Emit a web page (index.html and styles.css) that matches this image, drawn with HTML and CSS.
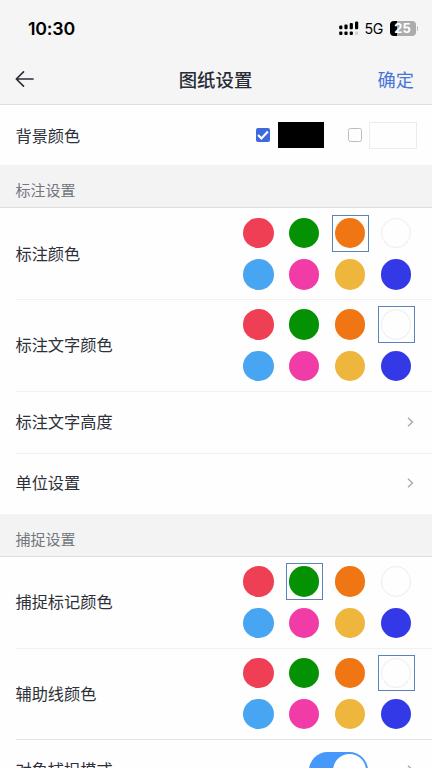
FILE: index.html
```html
<!DOCTYPE html>
<html lang="zh-CN">
<head>
<meta charset="utf-8">
<title>图纸设置</title>
<link rel="stylesheet" href="styles.css">
</head>
<body>
<header class="top">
  <div class="status">
    <span class="time">10:30</span>
    <div class="indicators">
      <svg class="signal" width="20" height="15" viewBox="0 0 20 15">
        <g fill="#000">
          <rect x="0.2" y="4.6" width="3.2" height="3.6" rx="1"/>
          <rect x="5.4" y="3.4" width="3.2" height="4.8" rx="1"/>
          <rect x="10.7" y="2" width="3.2" height="6.2" rx="1"/>
          <rect x="16" y="0.6" width="3.2" height="7.6" rx="1"/>
          <rect x="0.2" y="10.4" width="3.2" height="3.6" rx="1"/>
          <rect x="5.4" y="10.4" width="3.2" height="3.6" rx="1"/>
          <rect x="10.7" y="10.4" width="3.2" height="3.6" rx="1"/>
        </g>
        <rect x="16" y="10.4" width="3.2" height="3.6" rx="1" fill="#d4d4d4"/>
      </svg>
      <span class="network">5G</span>
      <span class="battery">25</span>
      <span class="battery-tip"></span>
    </div>
  </div>
  <nav class="nav">
    <svg class="back" width="20" height="18" viewBox="0 0 20 18" fill="none" stroke="#2b2f3a" stroke-width="1.7" stroke-linecap="round" stroke-linejoin="round"><path d="M18 9H1.5M8.5 1.8L1.3 9l7.2 7.2"/></svg>
    <h1>图纸设置</h1>
    <span class="confirm">确定</span>
  </nav>
</header>
<main>
  <section class="row background">
    <span class="label">背景颜色</span>
    <div class="options">
      <svg class="check" width="14" height="14" viewBox="0 0 14 14"><rect width="14" height="14" rx="2" fill="#3c69dc"/><path d="M2 7l3.4 3.4 6.5-7" fill="none" stroke="#fff" stroke-width="2.2"/></svg>
      <span class="sample black"></span>
      <span class="box"></span>
      <span class="sample white"></span>
    </div>
  </section>
  <h2>标注设置</h2>
  <section class="row colors">
    <span class="label">标注颜色</span>
    <div class="palette">
      <i class="red"></i><i class="green"></i><i class="orange selected"></i><i class="blank"></i>
      <i class="sky"></i><i class="pink"></i><i class="gold"></i><i class="blue"></i>
    </div>
  </section>
  <section class="row colors line">
    <span class="label">标注文字颜色</span>
    <div class="palette">
      <i class="red"></i><i class="green"></i><i class="orange"></i><i class="blank selected"></i>
      <i class="sky"></i><i class="pink"></i><i class="gold"></i><i class="blue"></i>
    </div>
  </section>
  <section class="row line">
    <span class="label">标注文字高度</span>
    <svg class="chevron" width="7" height="10" viewBox="0 0 7 10"><path d="M1 .8L5.5 5 1 9.2"/></svg>
  </section>
  <section class="row line">
    <span class="label">单位设置</span>
    <svg class="chevron" width="7" height="10" viewBox="0 0 7 10"><path d="M1 .8L5.5 5 1 9.2"/></svg>
  </section>
  <h2 class="snap">捕捉设置</h2>
  <section class="row colors">
    <span class="label">捕捉标记颜色</span>
    <div class="palette">
      <i class="red"></i><i class="green selected"></i><i class="orange"></i><i class="blank"></i>
      <i class="sky"></i><i class="pink"></i><i class="gold"></i><i class="blue"></i>
    </div>
  </section>
  <section class="row colors line">
    <span class="label">辅助线颜色</span>
    <div class="palette">
      <i class="red"></i><i class="green"></i><i class="orange"></i><i class="blank selected"></i>
      <i class="sky"></i><i class="pink"></i><i class="gold"></i><i class="blue"></i>
    </div>
  </section>
  <section class="row line strong">
    <span class="label">对象捕捉模式</span>
    <div class="mode">
      <span class="toggle"></span>
      <svg class="chevron" width="7" height="10" viewBox="0 0 7 10"><path d="M1 .8L5.5 5 1 9.2"/></svg>
    </div>
  </section>
</main>
</body>
</html>
```
FILE: styles.css
```css
* { box-sizing: border-box; }

body {
  margin: 0;
  height: 768px;
  overflow: hidden;
  background: #fefefe;
  color: #2d3039;
  font: 16.2px/24px "Noto Sans CJK SC", sans-serif;
}

.top {
  height: 105px;
  background: #f5f5f5;
  border-bottom: 1px solid #dedede;
}

.status {
  height: 56px;
  padding: 1px 14px 0 28px;
  display: flex;
  align-items: center;
  justify-content: space-between;
  color: #000;
  font-family: Inter, sans-serif;
}

.time { font-size: 17.8px; font-weight: 600; letter-spacing: -.2px; }
.indicators { display: flex; align-items: center; }
.signal { margin-right: 6px; }
.network { width: 19px; margin-right: 6px; font-size: 14.2px; letter-spacing: -.3px; }

.battery {
  width: 26px;
  height: 15px;
  border-radius: 4px;
  background: linear-gradient(to right, #000 7px, #ababab 7px);
  color: #fff;
  font-size: 13px;
  font-weight: 700;
  line-height: 15px;
  text-align: center;
}

.battery-tip {
  width: 1.5px;
  height: 5px;
  margin-left: 1px;
  border-radius: 0 2px 2px 0;
  background: #b8b8b8;
}

.nav {
  height: 46px;
  padding: 0 18px 0 15px;
  display: grid;
  grid-template-columns: 60px 1fr 58px;
  align-items: center;
}

h1 {
  margin: 0;
  text-align: center;
  color: #292c35;
  font-size: 18.4px;
  font-weight: 500;
}

.confirm { color: #4874dc; font-size: 18.2px; text-align: right; }

.row {
  height: 61.8px;
  padding: 0 13px 0 15.5px;
  display: flex;
  align-items: center;
  justify-content: space-between;
}

.label { padding-bottom: 2px; }

.line {
  background: linear-gradient(#f1f1f1, #f1f1f1) 16px 0 / 100% 1px no-repeat;
}

.strong { background-image: linear-gradient(#e2e2e2, #e2e2e2); }

.background { height: 60px; padding-right: 15px; }
.background .label { padding-bottom: 1px; }
.colors { height: 91.4px; }

h2 {
  height: 43px;
  margin: 0;
  padding: 8px 15.5px 0;
  display: flex;
  align-items: center;
  background: #f3f3f3;
  border-bottom: 1px solid #dedede;
  color: #727780;
  font-size: 15px;
  font-weight: 400;
}

.snap { height: 42.2px; }

.options { display: flex; align-items: center; }
.sample { width: 46px; height: 26px; margin-left: 8px; }
.black { background: #000; margin-right: 24px; }
.white { width: 48px; height: 27px; margin-left: 7px; border: 1px solid #ececec; }
.box { width: 14px; height: 14px; border: 1px solid #bcbcbc; border-radius: 2.5px; }

.palette {
  display: grid;
  grid-template-columns: repeat(4, 45.9px);
  grid-auto-rows: 41.3px;
  place-items: center;
}

.palette i {
  position: relative;
  width: 30.4px;
  height: 30.4px;
  border-radius: 50%;
}

.palette .selected::after {
  content: "";
  position: absolute;
  inset: -3.3px;
  border: 1.3px solid #5a82bb;
}

.palette .blank.selected::after { inset: -4.3px; }

.red { background: #ef3f55; }
.green { background: #049204; }
.orange { background: #ef7613; }
.blank { border: 1px solid #ececec; }
.sky { background: #48a5f2; }
.pink { background: #f13ca7; }
.gold { background: #efb63e; }
.blue { background: #3439e8; }

.chevron {
  margin-right: 5px;
  fill: none;
  stroke: #aaadb1;
  stroke-width: 1.5;
}

.mode { display: flex; align-items: center; gap: 39px; }

.toggle {
  width: 59px;
  height: 37px;
  padding: 2px;
  border-radius: 19px;
  background: #4699fb;
}

.toggle::before {
  content: "";
  display: block;
  width: 33px;
  height: 33px;
  margin-left: auto;
  border-radius: 50%;
  background: #fff;
}
```
